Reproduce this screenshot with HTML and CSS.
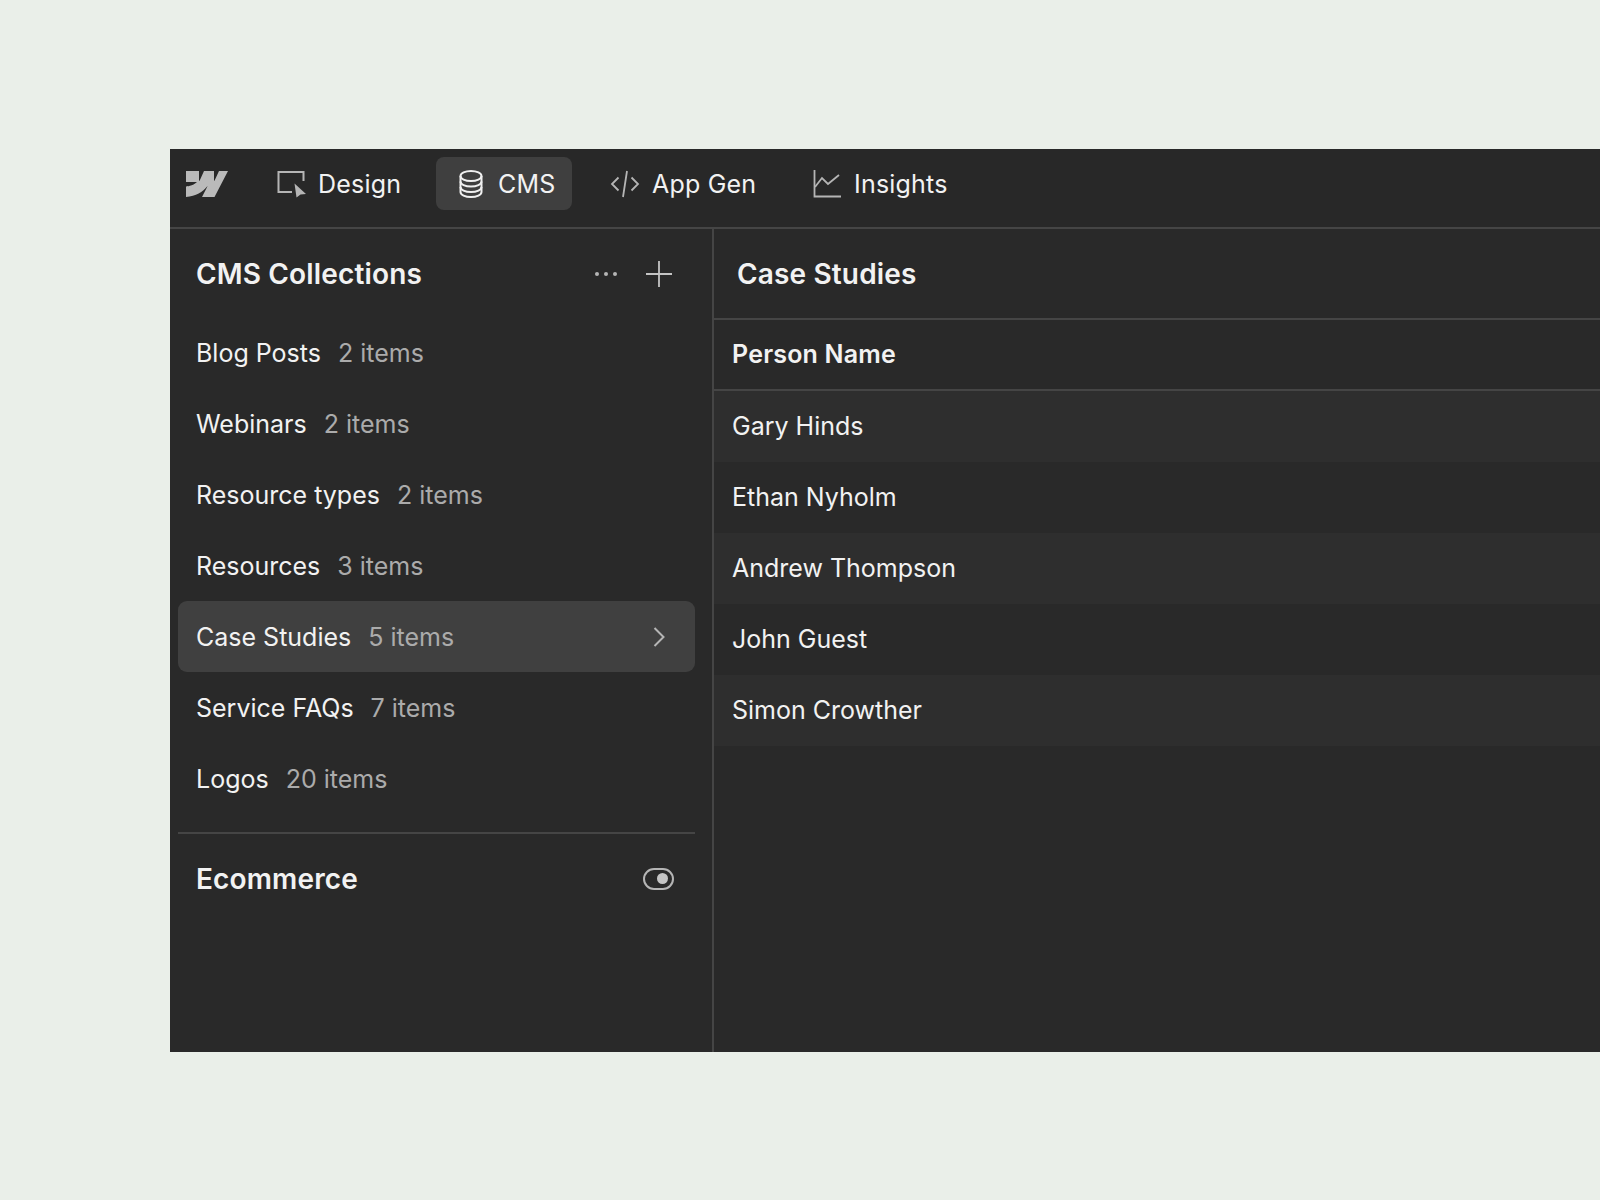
FILE: index.html
```html
<!DOCTYPE html>
<html lang="en">
<head>
<meta charset="utf-8">
<title>CMS Collections</title>
<link rel="stylesheet" href="styles.css">
</head>
<body>
<main class="app">
  <header class="topbar">
    <svg class="logo" width="44" height="28" viewBox="0 0 44 28"><path fill="#bababa" d="M43 1 29.500 27H17l5.500-10.700h-.2C17.800 22.200 11 26 1 27v-10.500s7-.4 11-4.500H1V1h13v9.800h.6L19 1h10v9.700h.5L34 1z"/></svg>
    <nav class="tabs">
      <div class="tab tab-design">
        <svg width="30" height="30" viewBox="0 0 30 30" fill="none"><path d="M16 23H2.500V3h25v9" stroke="#b5b5b5" stroke-width="2"/><path fill="#b5b5b5" d="M18.500 14.500 30 25l-5.500.5-4 3z"/></svg>
        <span>Design</span>
      </div>
      <div class="tab tab-cms is-active">
        <svg width="24" height="30" viewBox="0 0 24 30" fill="none" stroke="#f0f0f0" stroke-width="2"><ellipse cx="12" cy="7" rx="10.500" ry="5"/><path d="M1.500 7v16c0 2.800 4.700 5 10.500 5s10.500-2.200 10.500-5V7"/><path d="M1.500 12.500c0 2.800 4.700 5 10.500 5s10.500-2.200 10.500-5M1.500 18c0 2.800 4.700 5 10.500 5s10.500-2.200 10.500-5"/></svg>
        <span>CMS</span>
      </div>
      <div class="tab tab-app">
        <svg width="30" height="28" viewBox="0 0 30 28" fill="none" stroke="#b5b5b5" stroke-width="1.800"><path d="M8.500 7.500 2 14l6.500 6.500M21.500 7.500 28 14l-6.500 6.500M17 1l-4 26"/></svg>
        <span>App Gen</span>
      </div>
      <div class="tab tab-insights">
        <svg width="28" height="28" viewBox="0 0 28 28" fill="none" stroke="#b5b5b5" stroke-width="1.800"><path d="M1.500 0v26.500H28"/><path d="M2 17l7-9 6 6 11-9"/></svg>
        <span>Insights</span>
      </div>
    </nav>
  </header>
  <div class="body">
    <aside class="side">
      <div class="side-head">
        <h2>CMS Collections</h2>
        <div class="head-icons">
          <svg width="24" height="6" viewBox="0 0 24 6" fill="#b5b5b5"><circle cx="3" cy="3" r="2"/><circle cx="12" cy="3" r="2"/><circle cx="21" cy="3" r="2"/></svg>
          <svg width="26" height="26" viewBox="0 0 26 26" stroke="#c4c4c4" stroke-width="1.800"><path d="M13 0v26M0 13h26"/></svg>
        </div>
      </div>
      <ul class="list">
        <li class="item"><span>Blog Posts</span><em>2 items</em></li>
        <li class="item"><span>Webinars</span><em>2 items</em></li>
        <li class="item"><span>Resource types</span><em>2 items</em></li>
        <li class="item"><span>Resources</span><em>3 items</em></li>
        <li class="item is-active"><span>Case Studies</span><em>5 items</em>
          <svg class="chev" width="12" height="20" viewBox="0 0 12 20" fill="none" stroke="#b5b5b5" stroke-width="2"><path d="M1.500 1 10.500 10l-9 9"/></svg>
        </li>
        <li class="item"><span>Service FAQs</span><em>7 items</em></li>
        <li class="item"><span>Logos</span><em>20 items</em></li>
      </ul>
      <div class="ecom">
        <h2>Ecommerce</h2>
        <span class="toggle"><i></i></span>
      </div>
    </aside>
    <section class="content">
      <h2 class="content-title">Case Studies</h2>
      <div class="col-head">Person Name</div>
      <div class="row">Gary Hinds</div>
      <div class="row">Ethan Nyholm</div>
      <div class="row">Andrew Thompson</div>
      <div class="row">John Guest</div>
      <div class="row">Simon Crowther</div>
    </section>
  </div>
</main>
</body>
</html>
```
FILE: styles.css
```css
* { box-sizing: border-box; }
html, body { margin: 0; height: 100%; }
body {
  background: #eaefe9;
  font-family: Inter, "Liberation Sans", sans-serif;
  overflow: hidden;
  padding: 149px 0 0 170px;
}
.app {
  width: 1430px;
  height: 903px;
  background: #292929;
  color: #f2f2f2;
  display: flex;
  flex-direction: column;
}
.topbar {
  height: 80px;
  flex: none;
  background: #282828;
  border-bottom: 2px solid #454545;
  display: flex;
  align-items: flex-start;
  padding: 8px 0 0 15px;
}
.logo { margin: 13px 0 0; flex: none; }
.tabs { display: flex; margin-left: 27px; }
.tab {
  height: 53px;
  display: flex;
  align-items: center;
  gap: 12px;
  font-size: 25px;
  letter-spacing: .2px;
  border-radius: 8px;
  white-space: nowrap;
}
.tab-design { padding-left: 20px; width: 180px; }
.tab-cms { width: 136px; padding-left: 23px; gap: 15px; background: #3f3f3f; }
.tab-app { padding-left: 38px; width: 241px; }
.tab-insights { gap: 13px; }
.body { flex: 1; display: flex; min-height: 0; }
.side {
  width: 544px;
  flex: none;
  border-right: 2px solid #454545;
  padding: 0 17px 0 8px;
}
h2 { margin: 0; font-size: 28px; font-weight: 600; letter-spacing: .15px; }
.side-head {
  height: 88px;
  padding: 2px 23px 0 18px;
  display: flex;
  align-items: center;
  justify-content: space-between;
}
.head-icons { display: flex; align-items: center; gap: 28px; }
.list { list-style: none; margin: 0; padding: 0 0 18px; border-bottom: 2px solid #454545; }
.item {
  height: 71px;
  display: flex;
  align-items: center;
  gap: 17px;
  padding: 0 30px 0 18px;
  font-size: 25px;
  border-radius: 9px;
}
.item em { font-style: normal; color: #ababab; }
.item.is-active { background: #404040; }
.chev { margin-left: auto; }
.ecom {
  height: 90px;
  display: flex;
  align-items: center;
  justify-content: space-between;
  padding: 0 21px 1px 18px;
}
.toggle {
  width: 31px;
  height: 22px;
  border: 2px solid #b5b5b5;
  border-radius: 11px;
  display: flex;
  align-items: center;
  justify-content: flex-end;
  padding-right: 4px;
}
.toggle i { width: 11px; height: 11px; border-radius: 50%; background: #c4c4c4; }
.content { flex: 1; min-width: 0; }
.content-title {
  height: 91px;
  display: flex;
  align-items: center;
  padding-left: 23px;
  border-bottom: 2px solid #454545;
}
.col-head {
  height: 71px;
  display: flex;
  align-items: center;
  padding: 0 0 1px 18px;
  font-size: 25px;
  font-weight: 600;
  letter-spacing: .2px;
  border-bottom: 2px solid #454545;
}
.row {
  height: 71px;
  display: flex;
  align-items: center;
  padding: 0 0 2px 18px;
  font-size: 25px;
}
.row:nth-of-type(even) { background: #2e2e2e; }
```
